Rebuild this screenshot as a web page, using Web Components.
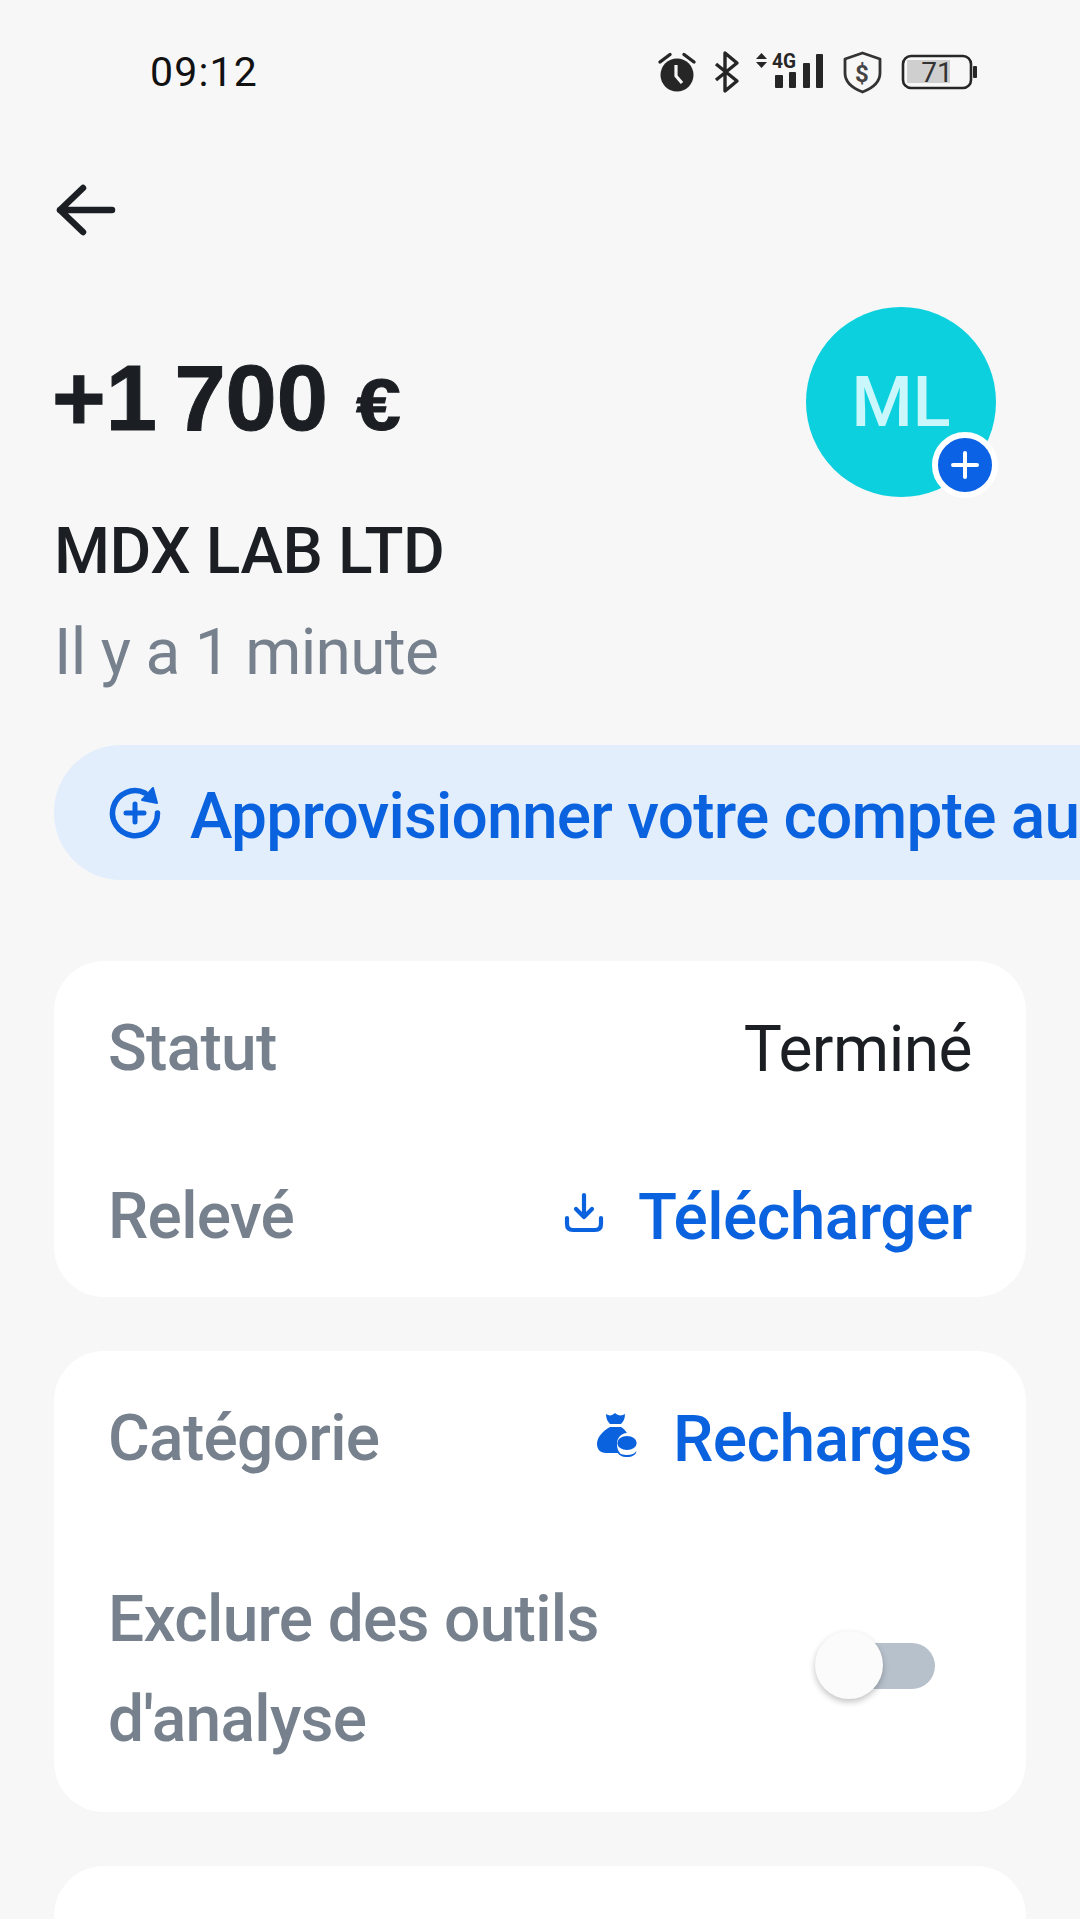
<!DOCTYPE html>
<html lang="fr">
<head>
<meta charset="utf-8">
<title>Transaction</title>
<style>
html, body { margin: 0; height: 1919px; overflow: hidden; background: #f7f7f8; font-family: Roboto, "Liberation Sans", sans-serif; }
</style>
</head>
<body>
<txn-page>
  <status-bar></status-bar>
  <back-bar></back-bar>
  <txn-header amount="+1 700" currency="€" name="MDX LAB LTD" when="Il y a 1 minute" initials="ML"></txn-header>
  <promo-chip>Approvisionner votre compte au</promo-chip>
  <info-card>
    <info-row label="Statut" style="height:168px"><span>Terminé</span></info-row>
    <info-row label="Relevé" style="height:168px" link icon="download">Télécharger</info-row>
  </info-card>
  <info-card>
    <info-row label="Catégorie" style="height:168px" link icon="bag">Recharges</info-row>
    <info-row label="Exclure des outils d'analyse" wrap style="height:293px"><toggle-switch></toggle-switch></info-row>
  </info-card>
  <info-card style="height:200px"></info-card>
</txn-page>
<script>
class txn_page extends HTMLElement {
    constructor() {
        super();
        this.attachShadow({ mode: 'open' }).innerHTML = `
<style>
  :host { display: flex; flex-direction: column; width: 1080px; height: 1919px; overflow: hidden; color: #1b1f23; }
</style>
<slot></slot>`;
    }
}
class status_bar extends HTMLElement {
    constructor() {
        super();
        this.attachShadow({ mode: 'open' }).innerHTML = `
<style>
  :host { display: flex; align-items: center; height: 144px; padding: 0 0 0 150px; box-sizing: border-box; flex: none; }
  #time { font: 400 41px Roboto, sans-serif; letter-spacing: 1.2px; color: #111; flex: 1; }
  svg { display: block; margin-right: 100px; }
</style>
<span id="time">09:12</span>
<svg width="330" height="48" viewBox="0 0 330 48" fill="#262626">
  <!-- alarm -->
  <circle cx="27" cy="27" r="16.5"/>
  <path d="M10 14 20 6.5M44 14 34 6.5" stroke="#262626" stroke-width="3.4" stroke-linecap="round" fill="none"/>
  <path d="M26 17v11l6 7" stroke="#f7f7f8" stroke-width="3.2" fill="none"/>
  <!-- bluetooth -->
  <path d="M66 16 87 33 75 43V5L87 15 66 32" stroke="#262626" stroke-width="3.4" fill="none" stroke-linejoin="round"/>
  <!-- 4g arrows -->
  <path d="M106 11 111.5 5 117 11ZM106 14 111.5 20 117 14Z"/>
  <text x="122" y="20" font-family="Roboto, sans-serif" font-weight="700" font-size="21" textLength="24" lengthAdjust="spacingAndGlyphs">4G</text>
  <rect x="125" y="27" width="8" height="13" rx="1"/>
  <rect x="139" y="24" width="7" height="16" rx="1"/>
  <rect x="153" y="15" width="7" height="25" rx="1"/>
  <rect x="166" y="6" width="7" height="34" rx="1"/>
  <!-- shield -->
  <path d="M212.5 5 230 11V25C230 34 223 40 212.5 44 202 40 195 34 195 25V11Z" stroke="#333" stroke-width="2.8" fill="none" stroke-linejoin="round"/>
  <text x="212" y="34" text-anchor="middle" font-family="Roboto, sans-serif" font-weight="700" font-size="24" fill="#444">$</text>
  <!-- battery -->
  <rect x="253" y="8" width="68" height="32" rx="8" fill="none" stroke="#262626" stroke-width="2.6"/>
  <rect x="257" y="12" width="43" height="23" fill="#cfcfcf"/>
  <rect x="323" y="18" width="4" height="12" rx="1"/>
  <text x="287" y="34" text-anchor="middle" font-family="Roboto, sans-serif" font-size="28" fill="#333">71</text>
</svg>`;
    }
}
class back_bar extends HTMLElement {
    constructor() {
        super();
        this.attachShadow({ mode: 'open' }).innerHTML = `
<style>
  :host { display: block; height: 113px; padding-left: 56px; flex: none; }
  svg { display: block; margin-top: 40px; }
</style>
<svg width="60" height="54" viewBox="0 0 60 54" fill="none" stroke="#1b1f23" stroke-width="6.5" stroke-linecap="round" stroke-linejoin="round">
  <path d="M27 4 4 26 27 48M4 26H56"/>
</svg>`;
    }
}
class txn_header extends HTMLElement {
    constructor() {
        super();
        this.attachShadow({ mode: 'open' });
    }
    connectedCallback() {
        this.shadowRoot.innerHTML = `
<style>
  :host { display: flex; justify-content: space-between; height: 488px; padding: 50px 0 0 54px; box-sizing: border-box; flex: none; }
  #amount { font: 700 92px/100px "Liberation Sans", Arial, sans-serif; word-spacing: -8px; -webkit-text-stroke: 1px #1b1f23; color: #1b1f23; margin: 41px 0 0 -2px; white-space: nowrap; }
  #amount small { display: inline-block; font-size: 72px; margin-left: 10px; transform: scaleX(1.12); transform-origin: left; }
  #name { font: 500 64px/70px Roboto, sans-serif; letter-spacing: -0.4px; color: #1b1f23; margin-top: 62px; }
  #when { font: 400 64px/70px Roboto, sans-serif; letter-spacing: -0.7px; color: #76818d; margin-top: 31px; }
  #avatar { position: relative; width: 190px; height: 190px; border-radius: 50%; background: #0cd0dd; color: #c9f7fb; font: 500 70px/190px Roboto, sans-serif; text-align: center; margin-right: 84px; flex: none; }
  #plus { position: absolute; right: -2px; bottom: -1px; width: 54px; height: 54px; border: 6px solid #fff; border-radius: 50%; background: #0b62e4; display: flex; align-items: center; justify-content: center; }
</style>
<div>
  <div id="amount">${this.getAttribute('amount')} <small>${this.getAttribute('currency')}</small></div>
  <div id="name">${this.getAttribute('name')}</div>
  <div id="when">${this.getAttribute('when')}</div>
</div>
<div id="avatar">${this.getAttribute('initials')}
  <div id="plus"><svg width="30" height="30" viewBox="0 0 30 30" stroke="#fff" stroke-width="4" stroke-linecap="round"><path d="M15 3V27M3 15H27"/></svg></div>
</div>`;
    }
}
class promo_chip extends HTMLElement {
    constructor() {
        super();
        this.attachShadow({ mode: 'open' }).innerHTML = `
<style>
  :host { display: flex; align-items: center; gap: 29px; height: 135px; margin-left: 54px; width: 1200px; padding-left: 55px; box-sizing: border-box; border-radius: 67px; background: #e3eefc; color: #0a62de; font: 500 64px Roboto, sans-serif; letter-spacing: -0.8px; white-space: nowrap; flex: none; margin-bottom: 81px; }
  svg { display: block; flex: none; }
  span { padding-top: 7px; }
</style>
<svg width="52" height="52" viewBox="0 0 52 52" fill="none" stroke="#0a62de" stroke-linecap="round">
  <path d="M48.5 26A22.5 22.5 0 1 1 36 6" stroke-width="5.5"/>
  <path d="M44 1 48 16 33 13Z" fill="#0a62de" stroke-width="2" stroke-linejoin="round"/>
  <path d="M26 17V35M17 26H35" stroke-width="5"/>
</svg>
<span><slot></slot></span>`;
    }
}
class info_card extends HTMLElement {
    constructor() {
        super();
        this.attachShadow({ mode: 'open' }).innerHTML = `
<style>
  :host { display: block; width: 972px; margin: 0 0 54px 54px; background: #fff; border-radius: 50px; flex: none; }
</style>
<slot></slot>`;
    }
}
const oRowIcons = {
    download: `<svg width="40" height="42" viewBox="0 0 40 42" fill="none" stroke="#0a62de" stroke-width="4.2" stroke-linecap="round" stroke-linejoin="round"><path d="M20 3V25M12 17 20 25 28 17M3 26V32C3 36 5 38 9 38H31C35 38 37 36 37 32V26"/></svg>`,
    bag: `<svg width="42" height="45" viewBox="0 0 42 45" fill="#0a62de"><path d="M9 1C12 3 15 3 18 0 21 3 25 3 28 1 28 6 26 9 24 11H13C11 9 9 6 9 1Z"/><path d="M13 14H24C26 15 28 17 30 20 24 20 20 25 20 31 20 35 21 38 23 40H9C3 40 0 36 0 31 0 24 6 18 13 14Z"/><ellipse cx="30" cy="30" rx="9.7" ry="7"/><path d="M20 38C23 41 26 42 30 42 34 42 37 41 39.5 38 39 42 35 44 30 44 25 44 21 42 20 38Z"/></svg>`
};
class info_row extends HTMLElement {
    constructor() {
        super();
        this.attachShadow({ mode: 'open' });
    }
    connectedCallback() {
        const bLink = this.hasAttribute('link');
        const sIcon = oRowIcons[this.getAttribute('icon')] || "";
        this.shadowRoot.innerHTML = `
<style>
  :host { display: flex; align-items: center; justify-content: space-between; padding: 0 54px 0 54px; box-sizing: border-box; }
  #label { font: 500 64px/100px Roboto, sans-serif; letter-spacing: -0.7px; color: #76818d; padding-top: 8px; ${this.hasAttribute('wrap') ? 'width: 560px;' : ''} }
  #value { display: flex; align-items: center; gap: 34px; font: ${bLink ? 500 : 400} 64px Roboto, sans-serif; letter-spacing: -0.5px; color: ${bLink ? '#0a62de' : '#1b1f23'}; }
  #text { padding-top: 8px; }
</style>
<span id="label">${this.getAttribute('label')}</span>
<span id="value">${sIcon}<span id="text"><slot></slot></span></span>`;
    }
}
class toggle_switch extends HTMLElement {
    constructor() {
        super();
        this.attachShadow({ mode: 'open' }).innerHTML = `
<style>
  :host { display: block; position: relative; width: 96px; height: 46px; margin: 0 37px 8px 0; border-radius: 23px; background: #b7c1cc; }
  #knob { position: absolute; left: -24px; top: -12px; width: 68px; height: 68px; border-radius: 50%; background: #fbfbfb; box-shadow: 0 3px 6px rgba(0,0,0,.24); }
</style>
<div id="knob"></div>`;
    }
}
customElements.define('txn-page', txn_page);
customElements.define('status-bar', status_bar);
customElements.define('back-bar', back_bar);
customElements.define('txn-header', txn_header);
customElements.define('promo-chip', promo_chip);
customElements.define('info-card', info_card);
customElements.define('info-row', info_row);
customElements.define('toggle-switch', toggle_switch);
</script>
</body>
</html>
